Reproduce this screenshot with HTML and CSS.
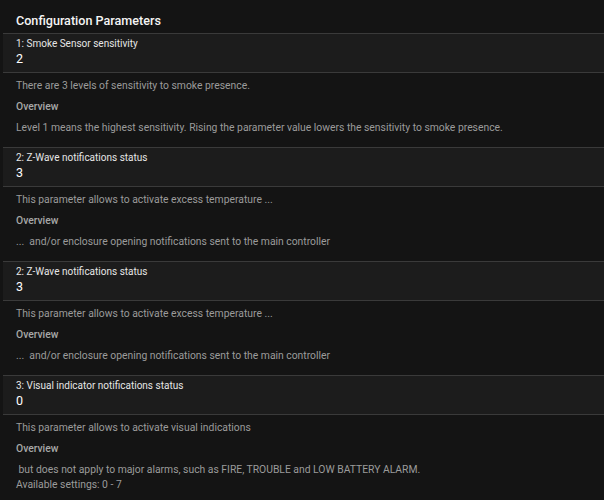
FILE: index.html
```html
<!DOCTYPE html>
<html>
<head>
<meta charset="utf-8">
<link rel="stylesheet" href="styles.css">
</head>
<body>
<div class="page">
  <h1 class="title">Configuration Parameters</h1>

  <section class="param">
    <div class="param-head">
      <div class="param-label">1: Smoke Sensor sensitivity</div>
      <div class="param-value">2</div>
    </div>
    <div class="param-body">
      <p class="desc">There are 3 levels of sensitivity to smoke presence.</p>
      <p class="overview">Overview</p>
      <p class="desc">Level 1 means the highest sensitivity. Rising the parameter value lowers the sensitivity to smoke presence.</p>
    </div>
  </section>

  <section class="param">
    <div class="param-head">
      <div class="param-label">2: Z-Wave notifications status</div>
      <div class="param-value">3</div>
    </div>
    <div class="param-body">
      <p class="desc">This parameter allows to activate excess temperature ...</p>
      <p class="overview">Overview</p>
      <p class="desc">...&nbsp; and/or enclosure opening notifications sent to the main controller</p>
    </div>
  </section>

  <section class="param">
    <div class="param-head">
      <div class="param-label">2: Z-Wave notifications status</div>
      <div class="param-value">3</div>
    </div>
    <div class="param-body">
      <p class="desc">This parameter allows to activate excess temperature ...</p>
      <p class="overview">Overview</p>
      <p class="desc">...&nbsp; and/or enclosure opening notifications sent to the main controller</p>
    </div>
  </section>

  <section class="param">
    <div class="param-head">
      <div class="param-label">3: Visual indicator notifications status</div>
      <div class="param-value">0</div>
    </div>
    <div class="param-body">
      <p class="desc">This parameter allows to activate visual indications</p>
      <p class="overview">Overview</p>
      <p class="desc">&nbsp;but does not apply to major alarms, such as FIRE, TROUBLE and LOW BATTERY ALARM.<br>Available settings: 0 - 7</p>
    </div>
  </section>
</div>
</body>
</html>
```

FILE: styles.css
```css
html, body {
  margin: 0;
  padding: 0;
  background: #141414;
}

body {
  font-family: Roboto, Inter, "Liberation Sans", sans-serif;
  color: #9b9b9b;
  -webkit-font-smoothing: antialiased;
}

.page {
  width: 604px;
  height: 500px;
  overflow: hidden;
}

.title {
  margin: 0;
  padding: 12px 16px 4px;
  font-size: 12.6px;
  line-height: 17px;
  font-weight: 500;
  color: #f4f4f4;
}

.param-head {
  margin-left: 3px;
  padding: 2px 13px 5px;
  background: #1c1c1c;
  border-top: 1px solid #3a3a3a;
  border-bottom: 1px solid #3a3a3a;
}

.param-label {
  font-size: 10px;
  line-height: 15px;
  color: #e6e6e6;
}

.param-value {
  font-size: 12.5px;
  line-height: 16px;
  color: #ffffff;
}

.param-body {
  padding: 5px 16px 12px;
  display: flex;
  flex-direction: column;
  gap: 6px;
}

.param-body p {
  margin: 0;
  font-size: 10.35px;
  line-height: 15px;
}

.desc {
  color: #9b9b9b;
}

.overview {
  font-weight: 500;
  color: #a8a8a8;
}
```
